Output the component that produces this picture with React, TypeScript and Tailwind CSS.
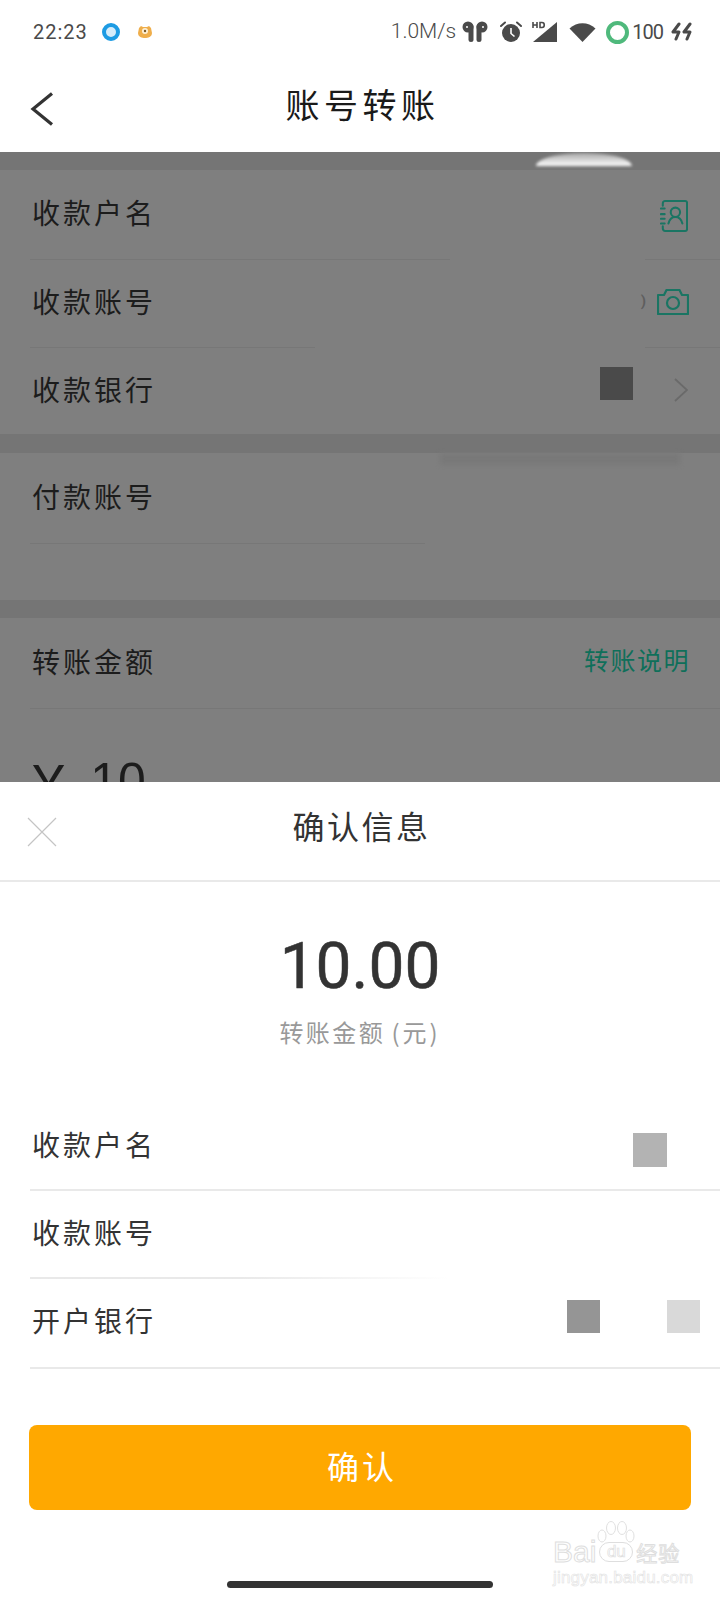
import React from 'react';

const cjk = { fontFamily: '"Noto Sans CJK SC", "Noto Sans", sans-serif' };

function Airpods() {
  return (
    <svg width="26" height="22" viewBox="0 0 26 22" fill="#4a4a4a">
      <circle cx="6" cy="6" r="5.5" />
      <rect x="6.5" y="3" width="5" height="18" rx="2.5" />
      <circle cx="20" cy="6" r="5.5" />
      <rect x="14.5" y="3" width="5" height="18" rx="2.5" />
      <circle cx="5" cy="6" r="1" fill="#fff" />
      <circle cx="21" cy="6" r="1" fill="#fff" />
    </svg>
  );
}

function Alarm() {
  return (
    <svg width="22" height="22" viewBox="0 0 22 22">
      <circle cx="11" cy="12" r="9" fill="#4a4a4a" />
      <path d="M1 5l4-3.5M21 5l-4-3.5" stroke="#4a4a4a" strokeWidth="2" strokeLinecap="round" />
      <path d="M11 7v5.5l3.5 3" stroke="#fff" strokeWidth="1.6" fill="none" />
    </svg>
  );
}

function Signal() {
  return (
    <svg width="26" height="22" viewBox="0 0 26 22">
      <path d="M25 1v20H1z" fill="#4a4a4a" />
      <path d="M1 1v6M1 4h4M5 1v6M8 1.500v5h2c3 0 3-5 0-5z" stroke="#4a4a4a" strokeWidth="1.600" fill="none" />
    </svg>
  );
}

function Wifi() {
  return (
    <svg width="27" height="20" viewBox="0 0 27 20">
      <path d="M0.500 6.500C8 -0.500 19 -0.500 26.500 6.500L13.500 20z" fill="#4a4a4a" />
    </svg>
  );
}

function Bolts() {
  return (
    <svg width="22" height="20" viewBox="0 0 22 20" fill="none" stroke="#4a4a4a" strokeWidth="3" strokeLinecap="round" strokeLinejoin="round">
      <path d="M8 2L2 10h6l-3 7" />
      <path d="M19 2l-6 8h6l-3 7" />
    </svg>
  );
}

function CatIcon() {
  return (
    <svg width="16" height="14" viewBox="0 0 16 14">
      <path d="M2 3L4 1l2 1h4l2-1 2 2 1 5c0 4-4 5-7 5s-7-1-7-5z" fill="#efae4b" />
      <circle cx="8" cy="6" r="3" fill="#fdf0d5" />
      <circle cx="8" cy="6" r="1.200" fill="#7a5a2a" />
    </svg>
  );
}

function ContactBook() {
  return (
    <svg width="28" height="32" viewBox="0 0 30 34" fill="none" stroke="#1a7563" strokeWidth="2.200" strokeLinecap="round" strokeLinejoin="round">
      <path d="M3 6V3.500C3 2 4 1 5.500 1H27c1 0 2 1 2 2v28c0 1-1 2-2 2H5.500C4 33 3 32 3 30.500V28" />
      <path d="M1 9h4M1 15h4M1 20h4M1 25h4" />
      <circle cx="16.500" cy="13" r="5" />
      <path d="M9 25c1-4 3.500-7 7.500-7s6.500 3 7.500 7" />
    </svg>
  );
}

function Camera() {
  return (
    <svg width="32" height="26" viewBox="0 0 32 26" fill="none" stroke="#1a7563" strokeWidth="2.200" strokeLinejoin="round">
      <path d="M1 6h6l2.500-5h13L25 6h6v19H1z" />
      <circle cx="16" cy="14" r="6" />
    </svg>
  );
}

function Row({ label, className, children }: { label: string; className: string; children?: React.ReactNode }) {
  return (
    <div className={`ml-[32px] flex items-center justify-between ${className}`}>
      <span className="text-[28px] tracking-[3px] text-[#1c1c1c]">{label}</span>
      {children}
    </div>
  );
}

function SheetRow({ label, className, children }: { label: string; className: string; children?: React.ReactNode }) {
  return (
    <div className={`relative ml-[30px] flex items-center ${className}`}>
      <span className="ml-[2px] text-[28px] tracking-[3px] text-[#333333]">{label}</span>
      {children}
    </div>
  );
}

export default function App() {
  return (
    <div className="relative w-[720px] h-[1600px] overflow-hidden bg-white" style={cjk}>
      {/* status bar */}
      <div className="h-[64px] flex items-center pl-[33px] pr-[27px] font-['Roboto'] text-[#4a4a4a]">
        <span className="text-[20px] tracking-[1px]">22:23</span>
        <div className="ml-[14px] w-[18px] h-[18px] rounded-full border-[4px] border-[#1d9be3] bg-[#d5ecfa]" />
        <div className="ml-[17px]"><CatIcon /></div>
        <span className="ml-auto text-[21px] font-light">1.0M/s</span>
        <div className="ml-[6px]"><Airpods /></div>
        <div className="ml-[12px]"><Alarm /></div>
        <div className="ml-[10px]"><Signal /></div>
        <div className="ml-[11px]"><Wifi /></div>
        <div className="ml-[10px] w-[23px] h-[23px] rounded-full border-[4px] border-[#4fb97c]" />
        <span className="ml-[3px] text-[20px] tracking-[-1px]">100</span>
        <div className="ml-[8px]"><Bolts /></div>
      </div>

      {/* nav */}
      <div className="relative h-[88px] flex items-center justify-center">
        <svg className="absolute left-[30px] top-[28px]" width="24" height="34" viewBox="0 0 24 34" fill="none" stroke="#333333" strokeWidth="3.200">
          <path d="M22 1.500L3 17l19 15.500" />
        </svg>
        <h1 className="ml-[5px] mt-[-10px] text-[34px] font-normal tracking-[4.500px] text-[#1a1a1a]">账号转账</h1>
      </div>

      {/* dimmed form behind the sheet */}
      <div className="relative h-[630px] overflow-hidden bg-[#757575]">
        <div className="absolute left-[536px] top-[1px] w-[96px] h-[13px] rounded-t-[50%_100%] bg-gradient-to-b from-[#a8a8a8] to-white blur-[1.5px]" />
        <div className="mt-[18px] h-[264px] bg-[#7f7f7f]">
          <Row label="收款户名" className="h-[89px] pb-[6px]">
            <div className="mr-[32px] mt-[8px]"><ContactBook /></div>
          </Row>
          <div className="flex justify-between">
            <div className="ml-[30px] w-[420px] h-px bg-[#777777]" />
            <div className="w-[75px] h-px bg-[#777777]" />
          </div>
          <Row label="收款账号" className="h-[87px] pb-[5px]">
            <div className="relative mr-[31px] mt-[2px]">
              <Camera />
              <span className="absolute right-[43px] top-[1px] font-['Roboto'] text-[15px] font-bold text-[#5e5e5e]">)</span>
            </div>
          </Row>
          <div className="flex justify-between">
            <div className="ml-[30px] w-[285px] h-px bg-[#777777]" />
            <div className="w-[75px] h-px bg-[#777777]" />
          </div>
          <Row label="收款银行" className="h-[86px] pb-[4px]">
            <div className="relative flex items-center mr-[32px] mt-[2px]">
              <div className="absolute right-[55px] top-[-11px] w-[33px] h-[33px] bg-[#4a4a4a]" />
              <svg width="14" height="24" viewBox="0 0 14 24" fill="none" stroke="#6a6a6a" strokeWidth="1.800">
                <path d="M1 1l12 11L1 23" />
              </svg>
            </div>
          </Row>
        </div>
        <div className="mt-[19px] h-[147px] bg-[#7f7f7f]">
          <div className="ml-[440px] w-[240px] h-[12px] bg-[#797979] blur-[2px]" />
          <Row label="付款账号" className="h-[78px] mt-[-12px] pt-[12px] pb-[4px]" />
          <div className="mt-[12px] ml-[30px] w-[395px] h-px bg-[#777777]" />
        </div>
        <div className="mt-[18px] bg-[#7f7f7f] h-[200px]">
          <Row label="转账金额" className="h-[90px] pb-[4px]">
            <span className="mr-[30px] mb-[3px] text-[25px] tracking-[1.500px] text-[#0f6f5a]">转账说明</span>
          </Row>
          <div className="ml-[30px] h-px bg-[#777777]" />
          <div className="ml-[33px] mt-[47px] flex items-start font-['Liberation_Sans'] leading-none text-[#1c1c1c]">
            <span className="text-[56px]">¥</span>
            <span className="ml-[26px] text-[50px]">10</span>
          </div>
        </div>
      </div>

      {/* confirm sheet */}
      <div className="h-[818px] bg-white">
        <div className="relative h-[100px] flex items-center justify-center border-b-2 border-[#e9e9e9]">
          <svg className="absolute left-[27px] top-[35px]" width="30" height="30" viewBox="0 0 30 30" stroke="#c4c4c4" strokeWidth="1.200">
            <path d="M1 1l28 28M29 1L1 29" />
          </svg>
          <span className="ml-[3px] mt-[-12px] text-[32px] tracking-[2.500px] text-[#333333]">确认信息</span>
        </div>
        <div className="flex flex-col items-center">
          <div className="mt-[47px] font-['Roboto'] text-[64px] leading-[76px] [-webkit-text-stroke:0.5px_#333333] text-[#333333]">10.00</div>
          <div className="mt-[10px] flex text-[24px] leading-[34px] tracking-[2.500px] text-[#999999]">
            <span>转账金额</span>
            <span className="ml-[6px] tracking-[3px]">(元)</span>
          </div>
        </div>
        <div className="mt-[54px]">
          <SheetRow label="收款户名" className="h-[88px] pb-[4px] border-b-2 border-[#e9e9e9]">
            <div className="absolute left-[603px] top-[30px] w-[34px] h-[34px] bg-[#b3b3b3]" />
          </SheetRow>
          <SheetRow label="收款账号" className="h-[88px] pb-[6px]">
            <div className="absolute left-0 bottom-0 w-[420px] h-[2px] bg-gradient-to-r from-[#e9e9e9] from-50% to-white" />
          </SheetRow>
          <SheetRow label="开户银行" className="h-[90px] pb-[6px] border-b-2 border-[#e9e9e9]">
            <div className="absolute left-[537px] top-[21px] w-[33px] h-[33px] bg-[#959595]" />
            <div className="absolute left-[637px] top-[21px] w-[33px] h-[33px] bg-[#d9d9d9]" />
          </SheetRow>
        </div>
        <div className="mt-[56px] mx-[29px] h-[85px] pb-[6px] pl-[4px] rounded-[8px] bg-[#ffa800] flex items-center justify-center text-[32px] tracking-[3px] text-white">
          确认
        </div>
      </div>

      {/* home indicator */}
      <div className="absolute left-[227px] bottom-[12px] w-[266px] h-[7px] rounded-full bg-[#333333]" />

      {/* baidu watermark */}
      <div className="absolute left-[553px] top-[1521px] w-[130px] font-['Liberation_Sans']">
        <svg className="absolute left-[44px] top-0" width="38" height="28" viewBox="0 0 38 28" fill="none" stroke="#e0e0e0" strokeWidth="1">
          <ellipse cx="5" cy="15" rx="4" ry="6" />
          <ellipse cx="14" cy="7" rx="4.500" ry="6.500" />
          <ellipse cx="25" cy="7" rx="4.500" ry="6.500" />
          <ellipse cx="33" cy="15" rx="4" ry="6" />
        </svg>
        <div className="mt-[17px] flex items-center text-[30px] leading-[28px] text-transparent [-webkit-text-stroke:1px_#dedede]">
          <span>Bai</span>
          <span className="ml-[3px] w-[34px] h-[20px] rounded-full border border-[#dedede] text-[17px] leading-[18px] text-center [-webkit-text-stroke:0.7px_#dedede]">du</span>
          <span className="ml-[3px] text-[21px] tracking-[1px]" style={cjk}>经验</span>
        </div>
        <div className="mt-[3px] text-[17px] leading-[18px] tracking-[0.2px] text-transparent [-webkit-text-stroke:0.6px_#e2e2e2]">jingyan.baidu.com</div>
      </div>
    </div>
  );
}
